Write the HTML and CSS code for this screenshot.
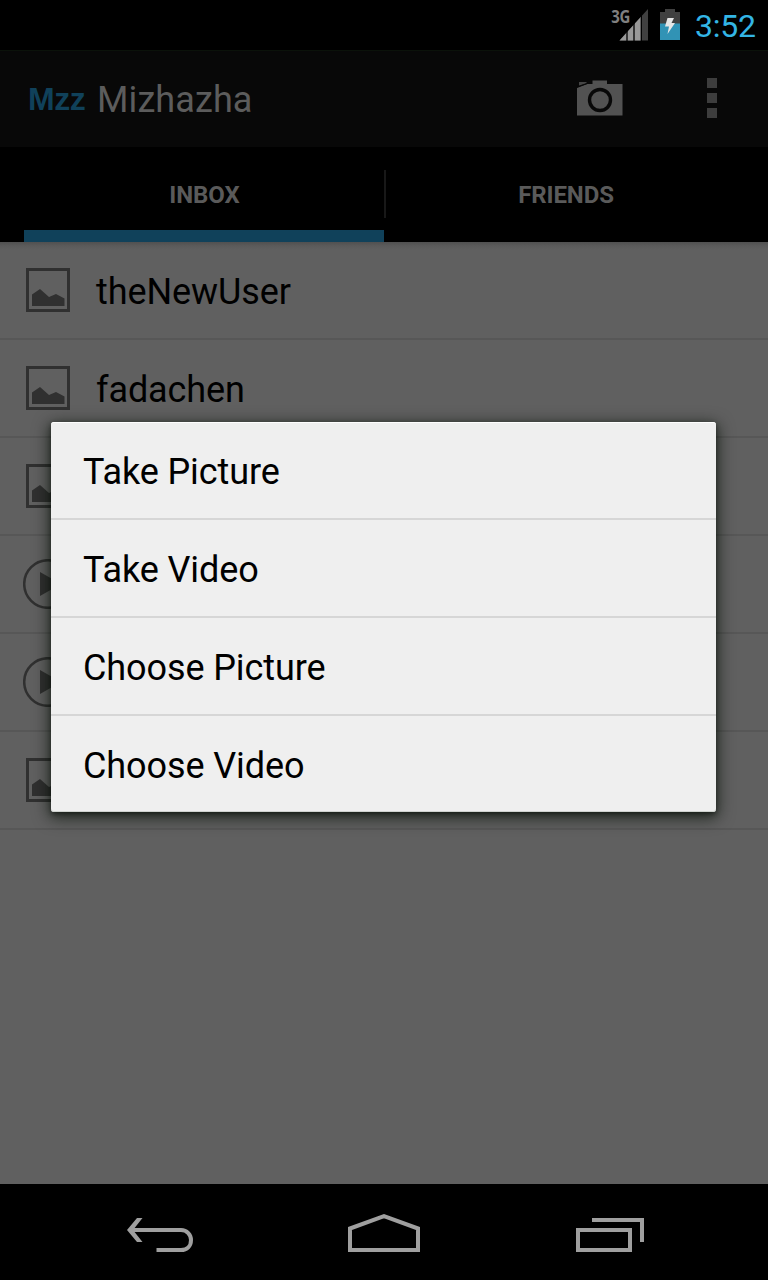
FILE: index.html
```html
<!DOCTYPE html>
<html lang="en">
<head>
<meta charset="utf-8">
<title>Mizhazha</title>
<link rel="stylesheet" href="styles.css">
</head>
<body>
<svg class="defs" aria-hidden="true">
  <symbol id="picture" viewBox="0 0 50 50">
    <path d="M4.500 4.500H45.500V45.500H4.500Z" fill="none" stroke="#303030" stroke-width="3"/>
    <path d="M9 29.500L17 24L26 32L33 29L41.500 33.500V41H9Z" fill="#303030"/>
  </symbol>
  <symbol id="video" viewBox="0 0 50 50">
    <circle cx="25" cy="25" r="23.800" fill="none" stroke="#303030" stroke-width="2.500"/>
    <path d="M17 13L38 25L17 37Z" fill="#303030"/>
  </symbol>
</svg>
<div class="phone">
  <header class="status">
    <svg class="signal" width="40" height="36" viewBox="610 6 40 36">
      <path d="M619.500 40.500L648 9V40.500Z" fill="#404040"/>
      <path d="M619.500 40.500L641 16.700V40.500Z" fill="#999"/>
      <path d="M627 30V41M634 22V41M641.300 14V41" stroke="#000" stroke-width="1.300"/>
      <text class="network" transform="translate(611.300 22.800) scale(.88 1)">3G</text>
    </svg>
    <svg class="battery" width="20" height="32" viewBox="0 0 20 32">
      <path d="M5 0H15V3H20V31H0V3H5Z" fill="#404040"/>
      <path d="M0 14.500H20V31H0Z" fill="#3193b5"/>
      <path d="M7.500 9H14L11.500 14H15L7.500 25L9 17.500H5Z" fill="#e6e6e6"/>
    </svg>
    <time class="clock">3:52</time>
  </header>
  <div class="actionbar">
    <span class="logo">Mzz</span>
    <h1 class="title">Mizhazha</h1>
    <svg class="camera" width="46" height="36" viewBox="0 0 46 36">
      <path d="M0 8L10 4H15.500V0.500H30V4H45.500V35.500H0Z" fill="#525252"/>
      <path d="M2 2H9.500V3.300L2 6Z" fill="#454545"/>
      <path d="M0 7L11 3.300" stroke="#080808" stroke-width="1.200"/>
      <circle cx="23" cy="20" r="10.500" fill="none" stroke="#080808" stroke-width="3.400"/>
    </svg>
    <div class="overflow"><i></i><i></i><i></i></div>
  </div>
  <nav class="tabs">
    <div class="tab active">INBOX</div>
    <div class="tab second">FRIENDS</div>
  </nav>
  <main class="content">
    <ul class="list">
      <li><svg><use href="#picture"/></svg><span>theNewUser</span></li>
      <li><svg><use href="#picture"/></svg><span>fadachen</span></li>
      <li><svg><use href="#picture"/></svg></li>
      <li><svg><use href="#video"/></svg></li>
      <li><svg><use href="#video"/></svg></li>
      <li><svg><use href="#picture"/></svg></li>
    </ul>
  </main>
  <footer class="navbar">
    <svg width="768" height="96" viewBox="0 1184 768 96" fill="none" stroke="#9f9f9f" stroke-width="4">
      <path d="M130 1230H181C187 1230 191 1235 191 1240C191 1246 187 1250 181 1250H156.500"/>
      <path d="M127 1230L137 1218H142.500L133 1230L142.500 1242H137Z" fill="#9f9f9f" stroke="none"/>
      <path d="M350 1250V1228.500L384 1216.200L418 1228.500V1250Z"/>
      <path d="M578 1230H630V1250H578ZM592 1220H642V1242"/>
    </svg>
  </footer>
  <div class="dialog" role="dialog">
    <div class="option">Take Picture</div>
    <div class="option">Take Video</div>
    <div class="option">Choose Picture</div>
    <div class="option">Choose Video</div>
  </div>
</div>
</body>
</html>
```
FILE: styles.css
```css
* { box-sizing: border-box; }
body { margin: 0; background: #000; font-family: Roboto, sans-serif; }
.defs { display: none; }
.phone { position: relative; width: 768px; height: 1280px; display: flex; flex-direction: column; overflow: hidden; }
.status { height: 50px; display: flex; align-items: flex-start; justify-content: flex-end; padding-right: 12px; background: #000; }
.signal { margin: 6px 10px 0 0; }
.network { font: 700 17px "Open Sans", sans-serif; fill: #808080; letter-spacing: -0.3px; }
.battery { margin-top: 9px; margin-right: 15px; }
.clock { width: 61px; height: 50px; font-size: 32px; line-height: 52px; color: #33b5e5; white-space: nowrap; letter-spacing: -0.2px; }
.actionbar { height: 97px; background: #080808; display: flex; align-items: center; padding-left: 28px; border-top: 1px solid #0b120a; }
.logo { width: 69px; color: #10415a; font: 700 32px/96px "Liberation Sans", sans-serif; letter-spacing: -0.5px; }
.title { margin: 0; padding-top: 2px; width: 480px; font-size: 36px; font-weight: 400; line-height: 96px; color: #5c5c5c; letter-spacing: 0.1px; }
.camera { flex: none; margin-bottom: 2px; }
.overflow { margin-left: 84px; margin-bottom: 2px; display: flex; flex-direction: column; gap: 5px; }
.overflow i { width: 10px; height: 10px; background: #3d3d3d; }
.tabs { height: 95px; padding: 0 24px; display: flex; background: #000; }
.tab { flex: none; width: 360px; display: flex; justify-content: center; color: #5a5a5a; font-size: 24px; font-weight: 700; line-height: 96px; letter-spacing: -0.1px; }
.active { padding-left: 1px; background: linear-gradient(#10415a, #10415a) bottom / 100% 12px no-repeat; }
.second { padding-left: 4px; background: linear-gradient(#181818, #181818) left 23px / 2px 48px no-repeat; }
.content { flex: 1; background: linear-gradient(#505050, #5b5b5b 4px, #606060 8px); }
.list { margin: 0; padding: 0; list-style: none; }
.list li { height: 98px; padding-left: 23px; display: flex; align-items: center; border-bottom: 2px solid #575757; color: #000; font-size: 36px; line-height: 92px; letter-spacing: -0.1px; }
.list li span { padding-top: 4px; }
.list li svg { width: 50px; height: 50px; margin-right: 23px; }
.navbar { height: 96px; background: #000; }
.navbar svg { display: block; }
.dialog { position: absolute; left: 51px; top: 422px; width: 665px; height: 390px; border-radius: 3px; background: #efefef; box-shadow: 0 4px 16px 2px rgba(0,12,0,.65), 0 2px 5px rgba(0,0,0,.45), inset 0 1px #fff, inset 0 -1px #cfd3cf; }
.option { height: 98px; padding-left: 32px; border-bottom: 2px solid #d6d6d6; font-size: 36px; line-height: 101px; color: #000; letter-spacing: -0.1px; }
.option:last-child { border-bottom: 0; }
```
